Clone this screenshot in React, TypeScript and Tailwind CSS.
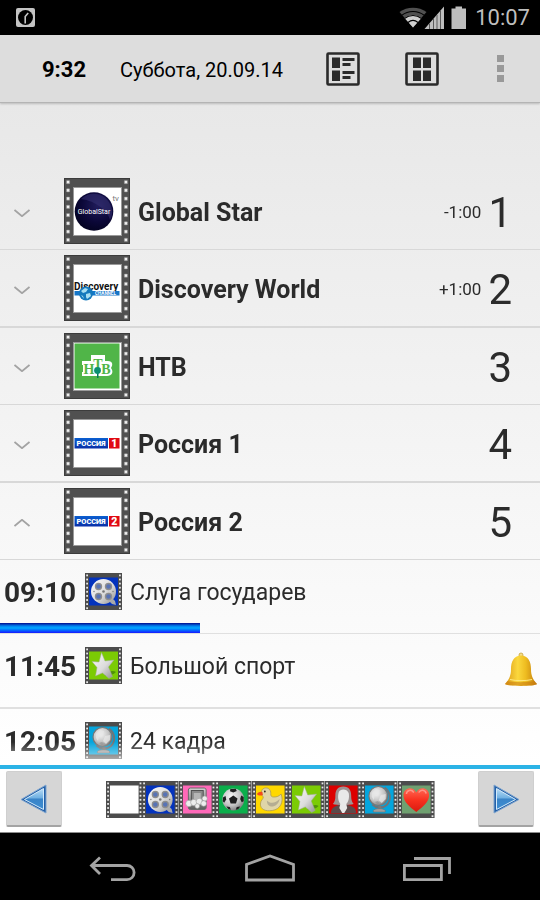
import { ReactNode } from 'react';

type Genre = 'none' | 'film' | 'series' | 'football' | 'kids' | 'sport' | 'people' | 'world' | 'love';

interface Channel {
    id: number;
    name: string;
    logo: 'global' | 'discovery' | 'ntv' | 'russia1' | 'russia2';
    offset?: string;
    open?: boolean;
}

interface Program {
    time: string;
    title: string;
    genre: Genre;
    progress?: number;
    reminder?: boolean;
}

const channels: Channel[] = [
    { id: 1, name: 'Global Star', logo: 'global', offset: '-1:00' },
    { id: 2, name: 'Discovery World', logo: 'discovery', offset: '+1:00' },
    { id: 3, name: 'НТВ', logo: 'ntv' },
    { id: 4, name: 'Россия 1', logo: 'russia1' },
    { id: 5, name: 'Россия 2', logo: 'russia2', open: true },
];

const programs: Program[] = [
    { time: '09:10', title: 'Слуга государев', genre: 'film', progress: 37 },
    { time: '11:45', title: 'Большой спорт', genre: 'sport', reminder: true },
    { time: '12:05', title: '24 кадра', genre: 'world' },
];

const genres: Genre[] = ['none', 'film', 'series', 'football', 'kids', 'sport', 'people', 'world', 'love'];

const genreColors: Record<Genre, string> = {
    none: '#ffffff',
    film: '#0433bd',
    series: '#ff69b9',
    football: '#0bae4b',
    kids: '#ffd800',
    sport: '#7bcb04',
    people: '#dc0000',
    world: '#05a5dc',
    love: '#6fa070',
};

const Gradients = () => (
    <svg className="absolute size-0" aria-hidden="true">
        <defs>
            <linearGradient id="silver" x1="0" y1="0" x2="1" y2="1">
                <stop offset="0" stopColor="#fafafa" />
                <stop offset="0.55" stopColor="#dcdcdc" />
                <stop offset="1" stopColor="#8e8e8e" />
            </linearGradient>
            <linearGradient id="steel" x1="0" y1="0" x2="0" y2="1">
                <stop offset="0" stopColor="#d2d2d2" />
                <stop offset="1" stopColor="#5c5c5c" />
            </linearGradient>
            <radialGradient id="ball" cx="0.4" cy="0.35" r="0.7">
                <stop offset="0" stopColor="#f5f5f5" />
                <stop offset="0.6" stopColor="#c4c4c4" />
                <stop offset="1" stopColor="#777777" />
            </radialGradient>
            <radialGradient id="navy" cx="0.6" cy="0.35" r="0.7">
                <stop offset="0" stopColor="#211c5c" />
                <stop offset="0.6" stopColor="#0b0738" />
                <stop offset="1" stopColor="#03021f" />
            </radialGradient>
            <linearGradient id="russia" x1="0" y1="0" x2="0" y2="1">
                <stop offset="0" stopColor="#0a5fd0" />
                <stop offset="1" stopColor="#0a2fa8" />
            </linearGradient>
            <linearGradient id="heart" x1="0" y1="0" x2="0" y2="1">
                <stop offset="0" stopColor="#ff6a55" />
                <stop offset="0.5" stopColor="#f8311f" />
                <stop offset="1" stopColor="#d91a10" />
            </linearGradient>
            <linearGradient id="gold" x1="0" y1="0" x2="1" y2="0">
                <stop offset="0" stopColor="#dc9a18" />
                <stop offset="0.4" stopColor="#fbd83e" />
                <stop offset="0.65" stopColor="#eebc20" />
                <stop offset="1" stopColor="#c07a0e" />
            </linearGradient>
            <linearGradient id="arrow" x1="0" y1="0" x2="0" y2="1">
                <stop offset="0" stopColor="#b9dcf5" />
                <stop offset="0.45" stopColor="#6fb0e2" />
                <stop offset="0.5" stopColor="#3a84c8" />
                <stop offset="1" stopColor="#3d8ed2" />
            </linearGradient>
        </defs>
    </svg>
);

const GenreDrawing = ({ genre }: { genre: Genre }) => {
    switch (genre) {
        case 'film':
            return (
                <g>
                    <path d="M27 25l3 3 1 4-4-1-3-3z" fill="#a9a9a9" />
                    <circle cx="18.5" cy="18.5" r="12.5" fill="url(#silver)" />
                    <g fill="#5873b5" stroke="#8d8d8d" strokeWidth="1.4">
                        <circle cx="13.5" cy="13.5" r="3" />
                        <circle cx="23.5" cy="13.5" r="3" />
                        <circle cx="13.5" cy="23.5" r="3" />
                        <circle cx="23.5" cy="23.5" r="3" />
                    </g>
                    <g fill="#777777">
                        <circle cx="18.5" cy="18.5" r="1.3" />
                        <circle cx="9" cy="18.5" r="0.7" />
                        <circle cx="28" cy="18.5" r="0.7" />
                    </g>
                </g>
            );
        case 'series':
            return (
                <g>
                    <rect x="9.5" y="7" width="18" height="21.500" rx="2" fill="url(#steel)" stroke="#6a6a6a" />
                    <rect x="12.5" y="9.5" width="12" height="13" fill="#8a8a8a" stroke="#4f4f4f" />
                    <rect x="15" y="12" width="7" height="7" fill="#b5b5b5" />
                    <g fill="#ededed" stroke="#9a9a9a" strokeWidth="0.6">
                        <circle cx="10" cy="22.5" r="3.2" />
                        <circle cx="26" cy="17.5" r="2.6" />
                        <circle cx="15" cy="21.5" r="3.2" />
                        <circle cx="20.5" cy="20.5" r="3.2" />
                        <circle cx="25" cy="22.5" r="2.8" />
                        <circle cx="18.500" cy="25" r="2.4" />
                    </g>
                </g>
            );
        case 'football':
            return (
                <g>
                    <circle cx="18.5" cy="18.5" r="11" fill="url(#ball)" />
                    <g fill="#1f1f1f">
                        <path d="M18.5 14.5l4.300 3-1.600 5h-5.400l-1.600-5z" />
                        <path d="M15.5 8l5.500-.3 1 2.300-3.500 1.500-3.300-1.300z" />
                        <path d="M8 16.500l2.700-1.500.6 3.500-2 3.200-1.500-1.500z" />
                        <path d="M29 16l-2.500-1.500-1 3.500 1.500 3.200 2-1z" />
                        <path d="M11.5 25.500l3.500.5 1 2.800-2.500-.8z" />
                        <path d="M25.500 25.500l-3.500.5-1 2.800 2.500-.6z" />
                    </g>
                </g>
            );
        case 'kids':
            return (
                <g>
                    <path
                        d="M11 8c4-3 8.500.5 8 4.500-.3 2.500.8 3.500 3 3.500 3 0 5-.5 7.500-3 3 8-1 15.500-9 16.500-7 1-12-1-12-6.500 0-3.500 3-5 3-7C9.500 14 8.500 10 11 8z"
                        fill="#dfd5a8"
                        stroke="#b09d50"
                        strokeWidth="0.8"
                    />
                    <path d="M15 19.500c4 4 9 2.500 13-1.500-1 5-5 8-9 7.500-2.500-.5-4-3-4-6z" fill="#b5ae92" />
                    <path d="M10.500 11c-2-.5-4 0-5.500 2 1 1.800 4 2 6 1z" fill="#f04a1c" />
                    <circle cx="13" cy="10.500" r="0.9" fill="#222222" />
                </g>
            );
        case 'sport':
            return (
                <g>
                    <path d="M20 28c4-4 8-5 11-3-2 2-6 4-11 4z" fill="#4f9208" />
                    <path
                        d="M16.500 5.500l3.500 8.500 9-1-5.500 7 4 9.500-3.500 2-6.500-5.500-7 3 1.500-8.500-5-6 7 .5z"
                        fill="url(#silver)"
                        stroke="#9cae86"
                        strokeWidth="0.5"
                    />
                </g>
            );
        case 'people':
            return (
                <g>
                    <path d="M6 32c0-5 4-7 8-8h9c5 1 8.500 3 8.500 8z" fill="#5b4a4a" />
                    <path d="M18.500 5.500c-6 0-8 4-8 9 0 4-.5 6-2.500 8.500 3 1.500 17 1.500 21 0-2-2.500-2.500-4.500-2.500-8.500 0-5-2-9-8-9z" fill="#9d9292" />
                    <path d="M14 11c1-3 8-4 10 1 1 5-.5 9-2.500 11l1 4-3 5h-2l-3-5 1-4c-2-3-3-7-1.500-12z" fill="#e9e9e9" />
                </g>
            );
        case 'world':
            return (
                <g>
                    <path d="M24 6.500c6.500 5 6.500 13 2 17.500-4.500 4-11 3-14.500-.5" fill="none" stroke="#6f7478" strokeWidth="2" />
                    <circle cx="17.5" cy="15" r="9.5" fill="url(#ball)" stroke="#777777" strokeWidth="1.2" />
                    <path d="M11 12l4-4 4 1-1 4-4 2-1 4-2-3zM20 14l5-1v5l-4 4-3-3z" fill="#e6e6e6" opacity="0.8" />
                    <path d="M14 21l3-1 2 2-2 1.500z" fill="#8c8c8c" opacity="0.6" />
                    <rect x="17.5" y="25" width="3" height="3.500" fill="#7a7a7a" />
                    <path d="M12.500 29.500c1-2.500 11-2.500 12 0V31h-12z" fill="#a0a0a0" stroke="#707070" strokeWidth="0.6" />
                </g>
            );
        case 'love':
            return (
                <g>
                    <path d="M18.500 31C12 26 5.500 21 5.500 14c0-7.500 10-9.500 13-2.500C21.500 4.500 31.500 6.500 31.500 14c0 7-6.500 12-13 17z" fill="url(#heart)" />
                    <path d="M8.500 13c.3-4 5-5 7.500-1.500M21 11.500c2-3.500 6.500-3 7.500 1" fill="none" stroke="#ff9486" strokeWidth="1.5" />
                </g>
            );
        default:
            return null;
    }
};

const GenreIcon = ({ genre, className }: { genre: Genre; className: string }) => (
    <svg viewBox="0 0 37 37" preserveAspectRatio="none" className={className} aria-hidden="true">
        <rect width="37" height="37" fill="#4c4c4c" />
        {[1.5, 5.6, 9.7, 13.8, 17.9, 22, 26.1, 30.2, 34.3].map((y) => (
            <g key={y} fill="#e8e8e8">
                <rect x="1.2" y={y} width="1.8" height="1.8" />
                <rect x="34" y={y} width="1.8" height="1.8" />
            </g>
        ))}
        <rect x="4" y="4.5" width="29" height="28" fill={genreColors[genre]} />
        <GenreDrawing genre={genre} />
    </svg>
);

const RussiaLogo = ({ digit }: { digit: string }) => (
    <g fontFamily="Roboto, sans-serif" fontWeight="900" fill="#ffffff">
        <rect x="10.5" y="28" width="33.5" height="10.5" fill="url(#russia)" />
        <text x="12.5" y="36" fontSize="7.4">РОССИЯ</text>
        <rect x="45" y="28" width="10.5" height="10.5" fill="#e00a14" />
        <text x="50.2" y="37" fontSize="10.5" textAnchor="middle">{digit}</text>
    </g>
);

const logos: Record<Channel['logo'], ReactNode> = {
    global: (
        <g fontFamily="Roboto, sans-serif">
            <circle cx="30" cy="33.5" r="19.3" fill="url(#navy)" />
            <path d="M17 21c8-8 22-7 28 3 4 7 4 13 1 18-2-9-14-19-29-21z" fill="#3a3578" opacity="0.5" />
            <text x="30" y="36" fontSize="7" textAnchor="middle" fill="#ffffff">GlobalStar</text>
            <text x="48.5" y="23" fontSize="8" fill="#777777">tv</text>
        </g>
    ),
    discovery: (
        <g fontFamily="'Liberation Sans Narrow', Roboto, sans-serif" fontWeight="700">
            <text x="10" y="34.5" fontSize="10" fill="#101010">Discovery</text>
            <rect x="10.5" y="36" width="45" height="4.5" fill="#1676c8" />
            <circle cx="22" cy="38.5" r="7" fill="#1579bd" />
            <path d="M17 36l4-3 3 1-2 3-3 1zM22 39l4-1 1 3-4 3-1-2zM17 40l2 1 1 3z" fill="#a8def2" />
            <text x="31" y="40" fontSize="4.6" fill="#ffffff">CHANNEL</text>
        </g>
    ),
    ntv: (
        <g fontFamily="'Liberation Serif', serif" fontWeight="700">
            <rect x="10.5" y="10.5" width="45" height="45" fill="#50b548" />
            <path d="M18 28h9v-6h14v6h3c5 0 5 4 3 7 3 4 1 8-4 8H18v-4h1v-7h-1z" fill="#ffffff" />
            <g fill="#50b548" textAnchor="middle">
                <text x="25" y="41" fontSize="14">Н</text>
                <text x="34" y="36" fontSize="14">Т</text>
                <text x="42" y="41" fontSize="14">В</text>
            </g>
            <rect x="33" y="38" width="1.5" height="7" fill="#067a5a" />
            <circle cx="33.5" cy="37.5" r="3.4" fill="#0a8f70" />
        </g>
    ),
    russia1: <RussiaLogo digit="1" />,
    russia2: <RussiaLogo digit="2" />,
};

const ChannelLogo = ({ logo }: { logo: Channel['logo'] }) => (
    <svg viewBox="0 0 66 66" className="size-[66px] shrink-0" aria-hidden="true">
        <rect width="66" height="66" fill="#3c3c3c" />
        <rect x="1" y="1" width="64" height="64" fill="#505050" />
        {[2.5, 10.7, 19, 27.2, 35.5, 43.7, 52, 60.2].map((y) => (
            <g key={y} fill="#f0f0f0" stroke="#858585" strokeWidth="0.6">
                <rect x="2.5" y={y} width="3.2" height="3.2" rx="0.5" />
                <rect x="60.3" y={y} width="3.2" height="3.2" rx="0.5" />
            </g>
        ))}
        <rect x="9.5" y="9.5" width="48" height="48" fill="#ffffff" stroke="#9a9a9a" />
        {logos[logo]}
    </svg>
);

const StatusBar = () => (
    <div className="flex h-[35px] shrink-0 items-center bg-black pl-4 pr-[10px] text-[#bebebe]">
        <svg viewBox="0 0 19 19" className="size-[19px]" aria-hidden="true">
            <rect width="19" height="19" rx="2" fill="#c4c4c4" />
            <circle cx="9.5" cy="9.5" r="7.5" fill="#000000" />
            <path d="M9.2 15.500V8.500l3-3.500" fill="none" stroke="#c4c4c4" strokeWidth="1.6" />
        </svg>
        <svg viewBox="0 0 68 24" className="ml-auto h-6 w-[68px]" aria-hidden="true">
            <path d="M14 21.500L.5 6C8 .2 20 .2 27.500 6z" fill="#505050" />
            <path d="M14 21.500L5.500 12c5-4 12-4 17 0z" fill="#d0d0d0" />
            <path d="M3 9.200c6-5 16-5 22 0M5.500 12.500c5-4 12-4 17 0M9 16.500c3-2.500 7-2.500 10 0" fill="none" stroke="#000000" strokeWidth="1.1" />
            <path d="M25.500 23L45 .5V23z" fill="#bebebe" />
            <path d="M30.500 17.500v5.500M34.500 13v10M38 9v14M41.500 5v18" stroke="#5a5a5a" strokeWidth="1" />
            <path d="M52.500 2.500h4V.5h6.500v2h4V23H52.500z" fill="#bebebe" />
        </svg>
        <span className="ml-2 text-[22px] leading-6">10:07</span>
    </div>
);

const ActionBar = () => (
    <header className="relative flex h-[68px] shrink-0 items-center border-b border-[#b4b4b4] bg-[#dddddd] pl-[42px] text-black shadow-[0_1px_2px_rgba(0,0,0,0.2)]">
        <div className="flex items-center pt-[2px]">
            <span className="w-[78px] text-[22px] font-bold">9:32</span>
            <span className="whitespace-nowrap text-xl">Суббота, 20.09.14</span>
        </div>
        <div className="ml-auto flex">
            <button type="button" aria-label="Список" className="flex h-12 w-[79px] items-center justify-center">
                <svg viewBox="0 0 34 34" className="size-[34px]" fill="#2a2a2a">
                    <rect x="1.5" y="1.5" width="31" height="31" rx="1" fill="none" stroke="#2a2a2a" strokeWidth="2.6" />
                    <rect x="6" y="5.5" width="8" height="10.5" />
                    <rect x="6" y="18.5" width="8" height="10.5" />
                    <rect x="16.5" y="6" width="12" height="3" />
                    <rect x="16.5" y="11" width="8" height="3" />
                    <rect x="16.5" y="19" width="12" height="3" />
                    <rect x="16.5" y="24" width="8" height="3" />
                </svg>
            </button>
            <button type="button" aria-label="Сетка" className="flex h-12 w-[79px] items-center justify-center">
                <svg viewBox="0 0 34 34" className="size-[34px]" fill="#2a2a2a">
                    <rect x="1.5" y="1.5" width="31" height="31" rx="1" fill="none" stroke="#2a2a2a" strokeWidth="2.6" />
                    <rect x="8" y="5.5" width="8" height="10.5" />
                    <rect x="18" y="5.5" width="8" height="10.5" />
                    <rect x="8" y="18.5" width="8" height="10.5" />
                    <rect x="18" y="18.5" width="8" height="10.5" />
                </svg>
            </button>
            <button type="button" aria-label="Меню" className="flex h-12 w-[79px] flex-col items-center justify-center gap-[3px]">
                <span className="size-[7px] bg-[#999999]" />
                <span className="size-[7px] bg-[#999999]" />
                <span className="size-[7px] bg-[#999999]" />
            </button>
        </div>
    </header>
);

const ChannelRow = ({ channel }: { channel: Channel }) => (
    <li className="border-[#d8d8d8] odd:border-b even:border-b-2">
        <button type="button" aria-expanded={!!channel.open} className="flex h-[76px] w-full items-center pt-1 pr-7 text-left text-[#2b2b2b]">
            <span className="flex w-16 shrink-0 pl-[14px]">
                <svg viewBox="0 0 16 8" className="h-2 w-4" fill="none" stroke="#a3a3a3" strokeWidth="1.8" aria-hidden="true">
                    <path d={channel.open ? 'M.5 7L8 .8 15.500 7' : 'M.5 1L8 7.200 15.500 1'} />
                </svg>
            </span>
            <span className="-mt-1">
                <ChannelLogo logo={channel.logo} />
            </span>
            <span className="ml-2 flex-1 text-[25px] font-bold">{channel.name}</span>
            {channel.offset && <span className="mr-[7px] text-[17px]">{channel.offset}</span>}
            <span className="text-[42px] leading-none">{channel.id}</span>
        </button>
    </li>
);

const Bell = () => (
    <svg viewBox="0 0 34 36" className="mt-2 mr-[2px] ml-auto h-9 w-[34px]" aria-hidden="true">
        <circle cx="17" cy="3" r="2" fill="#f3dc8a" stroke="#c9a23a" strokeWidth="0.8" />
        <path d="M17 3.500C9.500 3.500 7 10 7 17c0 6-1.500 10-6 15 2.500 2.500 29.500 2.500 32 0-4.500-5-6-9-6-15 0-7-2.500-13.500-10-13.500z" fill="url(#gold)" />
        <path d="M1 32c2.500 2.500 29.500 2.500 32 0l-2.500-3c-5 1.500-22 1.500-27 0z" fill="#c8780f" opacity="0.55" />
        <path d="M6 27.500c6 1.500 16 1.500 22 0" fill="none" stroke="#ffe982" />
    </svg>
);

const ProgramRow = ({ program }: { program: Program }) => (
    <li className="border-[#e0e0e0] odd:border-b even:border-b-2">
        <div className="flex h-[73px] flex-col justify-between pt-[13px]">
            <div className="flex h-[37px] items-center text-[#2b2b2b]">
                <span className="w-[85px] shrink-0 pt-[3px] pl-1 text-[28px] font-bold">{program.time}</span>
                <GenreIcon genre={program.genre} className="size-[37px] shrink-0" />
                <span className="ml-2 pt-[3px] text-[23px]">{program.title}</span>
                {program.reminder && <Bell />}
            </div>
            {program.progress && (
                <div
                    className="h-[10px] bg-[linear-gradient(to_bottom,#000a8c,#0080f0_30%,#00a8ff_50%,#0070ff_70%,#1818ff)]"
                    style={{ width: `${program.progress}%` }}
                />
            )}
        </div>
    </li>
);

const ArrowButton = ({ label, children }: { label: string; children: ReactNode }) => (
    <button
        type="button"
        aria-label={label}
        className="flex size-14 shrink-0 items-center justify-center rounded-xs border border-b-2 border-[#cfcfcf] border-b-[#a4a4a4] bg-[#d6d6d6]"
    >
        {children}
    </button>
);

const GenreBar = () => (
    <div className="flex shrink-0 items-center justify-between border-t-4 border-b border-t-[#2bb3e6] border-b-[#8c8c8c] bg-white px-[6px] pt-[2px] pb-[5px]">
        <ArrowButton label="Назад">
            <svg viewBox="0 0 28 30" className="h-[30px] w-7">
                <path d="M1 15.500L26 1v28z" fill="#2460a8" stroke="#7fa5cf" strokeWidth="1" />
                <path d="M4.500 15.500L23.500 4.500v21z" fill="url(#arrow)" stroke="#d4ebfb" strokeWidth="1" />
            </svg>
        </ArrowButton>
        <div className="grid w-[329px] grid-cols-9">
            {genres.map((genre) => (
                <button type="button" key={genre} aria-label={genre}>
                    <GenreIcon genre={genre} className="block h-[37px] w-full" />
                </button>
            ))}
        </div>
        <ArrowButton label="Вперёд">
            <svg viewBox="0 0 28 30" className="h-[30px] w-7">
                <path d="M27 15.500L2 1v28z" fill="#2460a8" stroke="#7fa5cf" strokeWidth="1" />
                <path d="M23.500 15.500L4.500 4.500v21z" fill="url(#arrow)" stroke="#d4ebfb" strokeWidth="1" />
            </svg>
        </ArrowButton>
    </div>
);

const NavBar = () => (
    <nav className="grid h-[67px] shrink-0 grid-cols-3 items-center bg-black px-[34px] pt-[2px] text-[#a3a3a3]">
        <button type="button" aria-label="Back" className="flex justify-center">
            <svg viewBox="0 0 48 28" className="h-7 w-12" fill="none" stroke="currentColor" strokeWidth="2.8">
                <path d="M11 3.500L2.500 11.500 11 20M3 11.500h35a7 7 0 0 1 0 14.200H22" />
            </svg>
        </button>
        <button type="button" aria-label="Home" className="flex justify-center">
            <svg viewBox="0 0 52 28" className="h-7 w-[52px]" fill="none" stroke="currentColor" strokeWidth="2.8">
                <path d="M2.500 26V10.500L26 2l23.500 8.500V26z" />
            </svg>
        </button>
        <button type="button" aria-label="Recent" className="flex justify-center">
            <svg viewBox="0 0 48 28" className="h-7 w-12" fill="none" stroke="currentColor" strokeWidth="2.8">
                <path d="M1.400 11.500h37v14.200h-37zM11 4.500h35.500V20" />
            </svg>
        </button>
    </nav>
);

export default function App() {
    return (
        <div className="flex h-screen flex-col bg-white font-[Roboto,sans-serif]">
            <Gradients />
            <StatusBar />
            <ActionBar />
            <main className="min-h-0 flex-1 bg-linear-to-b from-[#e8e8e8] via-[#f6f6f6] via-60% to-white">
                {/* the list fades out above the genre bar */}
                <div className="h-full overflow-y-auto pt-[70px] [scrollbar-width:none] [mask-image:linear-gradient(to_bottom,black_calc(100%-23px),rgba(0,0,0,0.3))]">
                    <ul>
                        {channels.map((channel) => (
                            <ChannelRow key={channel.id} channel={channel} />
                        ))}
                    </ul>
                    <ul>
                        {programs.map((program) => (
                            <ProgramRow key={program.time} program={program} />
                        ))}
                    </ul>
                </div>
            </main>
            <GenreBar />
            <NavBar />
        </div>
    );
}
